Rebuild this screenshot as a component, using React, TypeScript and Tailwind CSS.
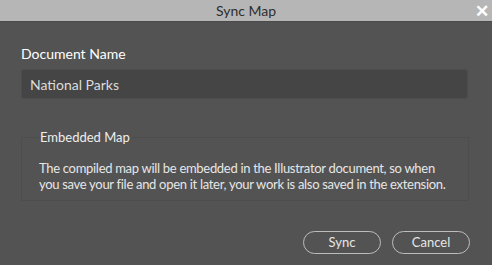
import React from "react";

const SyncMapDialog = () => {
  return (
    <div className="w-[492px] h-[265px] bg-[#535353] flex flex-col font-['Lato',sans-serif] text-[#e6e6e6]">
      <div className="h-[22px] bg-[#b6b6b6] border-b border-[#4a4a4a] flex items-center justify-center relative">
        <span className="text-[14px] text-[#2e2e2e]">Sync Map</span>
        <span className="absolute right-[3px] top-[1px] text-white text-[17px] leading-[20px] font-bold">✕</span>
      </div>
      <div className="flex flex-col px-[21px] pt-[23px]">
        <label className="text-[14px] leading-[18px] text-white">Document Name</label>
        <div className="mt-[6px] w-[447px] h-[30px] bg-[#454545] border border-[#4c4c4c] rounded-[3px] flex items-center px-[8px] text-[14px] text-[#dcdcdc]">
          National Parks
        </div>
        <fieldset className="mt-[30px] min-w-0 w-[448px] h-[72px] border border-[#4d4d4d] px-[17px]">
          <legend className="px-[1px] text-[13px] leading-[16px] text-[#eeeeee]">Embedded Map</legend>
          <p className="mt-[15px] text-[13px] leading-[16px] text-[#e6e6e6] whitespace-nowrap tracking-[-0.3px]">
            The compiled map will be embedded in the Illustrator document, so when
            <br />
            you save your file and open it later, your work is also saved in the extension.
          </p>
        </fieldset>
        <div className="flex justify-end gap-[11px] mt-[30px] pr-[1px]">
          <button className="w-[78px] h-[23px] rounded-full border border-[#bdbdbd] text-[13px] text-[#e6e6e6]">Sync</button>
          <button className="w-[78px] h-[23px] rounded-full border border-[#bdbdbd] text-[13px] text-[#e6e6e6]">Cancel</button>
        </div>
      </div>
    </div>
  );
};

export default function App() {
  return <SyncMapDialog />;
}
